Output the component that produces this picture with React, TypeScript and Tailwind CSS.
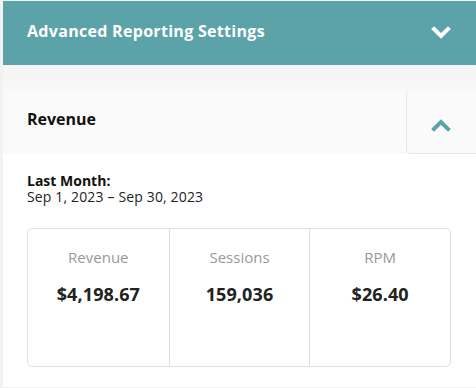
import React from 'react';

const ChevronDown = ({ className }: { className?: string }) => (
  <svg viewBox="0 0 20 14" className={className} fill="none" stroke="currentColor" strokeWidth={4} strokeLinecap="square">
    <path d="M3 3 L10 10 L17 3" />
  </svg>
);

const ChevronUp = ({ className }: { className?: string }) => (
  <svg viewBox="0 0 20 14" className={className} fill="none" stroke="currentColor" strokeWidth={4} strokeLinecap="square">
    <path d="M3 11 L10 4 L17 11" />
  </svg>
);

const metrics = [
  { label: 'Revenue', value: '$4,198.67' },
  { label: 'Sessions', value: '159,036' },
  { label: 'RPM', value: '$26.40' },
];

export default function App() {
  return (
    <div className="w-[476px] h-[388px] overflow-hidden bg-[#f2f2f2] pl-[3px] pt-px font-['Open_Sans',sans-serif]">
      {/* Settings header */}
      <div className="h-16 bg-[#5ca3a9] flex items-center justify-between pl-6 pr-[25px]">
        <span className="text-white font-bold text-[16px] leading-[20px] tracking-[0.3px] -mt-[5px]">Advanced Reporting Settings</span>
        <ChevronDown className="w-[20px] h-[14px] text-white" />
      </div>

      <div className="h-[25px] bg-gradient-to-b from-[#f4f4f4] to-[#f8f8f8]" />

      {/* Revenue card */}
      <div className="bg-white">
        <div className="h-16 bg-[#fafafa] flex">
          <div className="flex-1 flex items-center pl-6 pb-[6px]">
            <span className="text-[#111] font-bold text-[16px] leading-[20px]">Revenue</span>
          </div>
          <div className="w-[70px] border-l border-b border-[#e6e6e6] rounded-bl-[5px] rounded-tl-[5px] flex items-center justify-center pr-[2px] pt-[6px]">
            <ChevronUp className="w-[20px] h-[14px] text-[#5ca3a9]" />
          </div>
        </div>

        <div className="px-6 pt-[19px] pb-[20px]">
          <div className="text-[#111] font-bold text-[14px] leading-[16px]">Last Month:</div>
          <div className="text-[#222] text-[14px] leading-[16px] tracking-[0.15px]">Sep 1, 2023 – Sep 30, 2023</div>

          <div className="mt-[23px] w-[424px] h-[139px] border border-[#dedede] rounded-[5px] grid grid-cols-3">
            {metrics.map((m, i) => (
              <div key={m.label} className={`flex flex-col items-center pt-[18px] ${i > 0 ? 'border-l border-[#dedede]' : ''}`}>
                <span className="text-[#999] text-[15px] leading-[20px]">{m.label}</span>
                <span className="mt-[16px] text-[#222] font-bold text-[18px] leading-[22px] tracking-[0.1px]">{m.value}</span>
              </div>
            ))}
          </div>
        </div>
      </div>
    </div>
  );
}
